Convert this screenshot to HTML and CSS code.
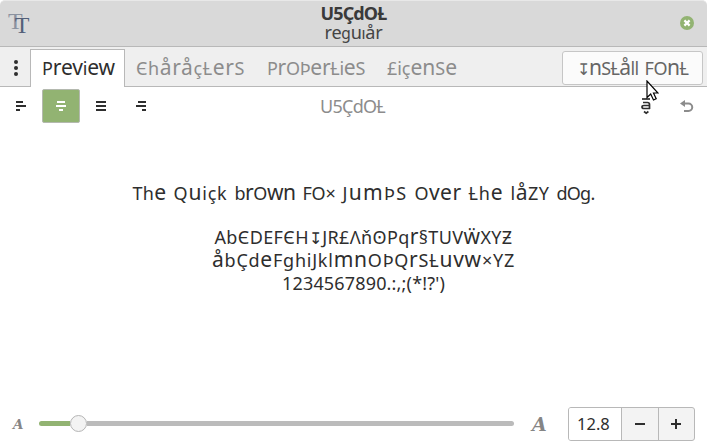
FILE: index.html
```html
<!DOCTYPE html>
<html lang="en">
<head>
<meta charset="utf-8">
<title>Font preview</title>
<link rel="stylesheet" href="styles.css">
</head>
<body>
<div class="window">
  <header class="titlebar">
    <div class="logo"><span class="logo-back">T</span><span class="logo-front">T</span></div>
    <div class="titles">
      <div class="title"><span class="w" data-w="66">U5ÇdOȽ</span></div>
      <div class="subtitle"><span class="w" data-w="58">reguıår</span></div>
    </div>
    <svg class="close" viewBox="0 0 14 14"><circle cx="7" cy="7" r="7"/><path d="M4.4 4.4l5.2 5.2M9.6 4.4L4.4 9.6"/></svg>
  </header>
  <nav class="tabs">
    <svg class="menu" viewBox="0 0 4 16"><circle cx="2" cy="2" r="2"/><circle cx="2" cy="8" r="2"/><circle cx="2" cy="14" r="2"/></svg>
    <div class="tab active"><span class="w" data-w="73">Preview</span></div>
    <div class="tab"><span class="w" data-w="109">ЄhåråçȽerS</span></div>
    <div class="tab"><span class="w" data-w="98">PrOÞerȽieS</span></div>
    <div class="tab"><span class="w" data-w="70">£içenSe</span></div>
    <button class="install"><span class="w" data-w="62">↧nSȽåll</span><span class="w" data-w="44">FOnȽ</span></button>
  </nav>
  <div class="tools">
    <div class="align"><svg viewBox="0 0 12 10"><path d="M1 1h7M1 5h10M1 9h4"/></svg></div>
    <div class="align on"><svg viewBox="0 0 12 10"><path d="M2 1h8M1 5h10M4 9h4"/></svg></div>
    <div class="align"><svg viewBox="0 0 12 10"><path d="M1 1h10M1 5h10M1 9h10"/></svg></div>
    <div class="align"><svg viewBox="0 0 12 10"><path d="M3 1h8M1 5h10M7 9h4"/></svg></div>
    <div class="name"><span class="w" data-w="65">U5ÇdOȽ</span></div>
    <svg class="edit" viewBox="0 0 12 18"><path d="M2 2h8"/><path d="M3 5.500h4.500q2 0 2 2v4.500M9.500 8.500H4q-2 0-2 1.500t2 1.500h6"/><path d="M4 14.500l2.200 1.700 2.200-1.700"/></svg>
    <svg class="undo" viewBox="0 0 14 13"><path d="M2 3.500h6.500a3.700 3.700 0 0 1 0 7.500H4"/><path class="head" d="M5 0v7L0 3.500z"/></svg>
  </div>
  <main class="sample">
    <div class="line pangram">
      <span class="w" data-w="34">The</span><span class="w" data-w="54">Quiçk</span><span class="w" data-w="61">brOwn</span><span class="w" data-w="33">FO×</span><span class="w" data-w="65">JumÞS</span><span class="w" data-w="47">Over</span><span class="w" data-w="35">Ƚhe</span><span class="w" data-w="39">låZY</span><span class="w" data-w="38">dOg.</span>
    </div>
    <div class="line"><span class="w" data-w="298">AbЄDEFЄH↧JR£ΛňʘPqr§TUVẅXYƵ</span></div>
    <div class="line"><span class="w" data-w="303">åbÇdeFghiJklmnOÞQrSȽuvw×YZ</span></div>
    <div class="line"><span class="w" data-w="163">1234567890.:,;(*!?')</span></div>
  </main>
  <footer class="size">
    <span class="small-a">A</span>
    <div class="slider"><div class="fill"></div><div class="knob"></div><div class="rest"></div></div>
    <span class="big-a">A</span>
    <div class="spin">
      <div class="value">12.8</div>
      <div class="step"><svg viewBox="0 0 10 10"><path d="M0 5h10"/></svg></div>
      <div class="step"><svg viewBox="0 0 10 10"><path d="M0 5h10M5 0v10"/></svg></div>
    </div>
  </footer>
  <svg class="cursor" viewBox="0 0 13 21"><path d="M1 1v16.500l3.700-3.500 2.800 6 2.700-1.300-2.700-5.700H12z"/></svg>
</div>
<script src="fit.js"></script>
</body>
</html>
```
FILE: styles.css
```css
* { box-sizing: border-box; }
body { margin: 0; background: #fff; }
.window {
  position: relative;
  width: 707px;
  height: 447px;
  display: flex;
  flex-direction: column;
  overflow: hidden;
  color: #2e2e2e;
  font: 18px "Noto Sans", sans-serif;
}
.w { display: inline-block; white-space: nowrap; font-weight: inherit; }
.tall { font-size: 1.17em; line-height: 0; }
.arrow { font-size: .9em; line-height: 0; }

.titlebar {
  height: 47px;
  flex: none;
  display: grid;
  grid-template-columns: 40px 1fr 40px;
  background: #d9d9d9;
  border-top: 1px solid #e8e8e8;
  border-bottom: 1px solid #b8b8b8;
  border-radius: 5px 5px 0 0;
}
.logo { padding: 7px 0 0 8px; font: 24px/26px "Liberation Serif", serif; display: flex; }
.logo-back { color: #8b92a0; }
.logo-front { color: #536079; margin: 4px 0 0 -8px; }
.titles { display: flex; flex-direction: column; align-items: center; padding-top: 3px; }
.title { font-weight: 700; font-size: 18px; line-height: 19px; height: 19px; color: #3a3a3a; }
.subtitle { font-size: 15.5px; line-height: 20px; height: 20px; color: #444; }
.close { width: 14px; height: 14px; margin: 15px 0 0 13px; }
.close circle { fill: #92b372; }
.close path { stroke: #fff; stroke-width: 2.2; }

.tabs {
  height: 40px;
  flex: none;
  display: flex;
  background: #efefef;
  border-bottom: 1px solid #b8b8b8;
  padding-right: 4px;
}
.menu { width: 4px; height: 16px; margin: 13px 12px 0 14px; fill: #2e2e2e; }
.tab { height: 38px; margin-top: 2px; padding-left: 11px; padding-right: 11px; line-height: 39px; color: #8c8c8c; }
.tab.active { width: 95px; height: 38px; padding: 0 10px 0 11px; border: 1px solid #b8b8b8; border-bottom: 0; background: #fff; color: #2e2e2e; line-height: 37px; margin-bottom: -1px; box-shadow: 0 1px #fff; }
.install {
  margin: 4px 0 0 auto;
  width: 141px;
  height: 34px;
  padding: 0;
  display: flex;
  justify-content: center;
  gap: 6px;
  border: 1px solid #c6c6c6;
  border-radius: 3px;
  background: #fbfbfb;
  color: #666;
  font: inherit;
  line-height: 32px;
}

.tools { height: 38px; flex: none; display: flex; padding: 2px 13px 0 2px; }
.align { width: 38px; height: 34px; margin-right: 2px; display: flex; align-items: center; justify-content: center; color: #2e2e2e; }
.align svg { width: 12px; height: 10px; fill: none; stroke: currentColor; stroke-width: 2; }
.align.on { color: #fff; background: #92b372; border: 1px solid #b4b9af; border-radius: 2px; }
.name { margin-left: 158px; line-height: 34px; color: #8c8c8c; }
.edit { width: 12px; height: 18px; margin: 8px 0 0 auto; fill: none; stroke: #2e2e2e; stroke-width: 1.7; }
.undo { width: 14px; height: 13px; margin: 11px 0 0 28px; fill: none; stroke: #8c8c8c; stroke-width: 2; }
.undo .head { fill: #8c8c8c; stroke: none; }

.sample { flex: 1; padding: 57px 0 0 20px; display: flex; flex-direction: column; align-items: center; }
.line { height: 23px; line-height: 23px; }
.pangram { display: flex; gap: 7px; margin-bottom: 21px; }

.size { height: 47px; flex: none; display: flex; align-items: center; padding: 0 12px; font: italic bold 15px "DejaVu Serif", serif; color: #858585; }
.small-a { width: 27px; padding-left: 1px; font-size: 13.500px; }
.slider { width: 475px; height: 17px; display: flex; align-items: center; }
.fill { width: 31px; height: 5px; background: #92b372; border-radius: 3px 0 0 3px; }
.knob { width: 17px; height: 17px; border: 1px solid #b5b5b5; border-radius: 50%; background: #f3f3f3; }
.rest { flex: 1; height: 5px; background: #bbb; border-radius: 0 3px 3px 0; }
.big-a { width: 54px; padding: 1px 0 0 18px; font-size: 19px; }
.spin { width: 127px; height: 34px; display: flex; border: 1px solid #b8b8b8; border-radius: 3px; overflow: hidden; background: #f3f3f3; color: #2e2e2e; font: 16.500px/31px "Noto Sans", sans-serif; }
.value { width: 52px; padding-left: 8px; background: #fff; }
.step { flex: 1; display: flex; align-items: center; justify-content: center; border-left: 1px solid #b8b8b8; }
.step svg { width: 10px; height: 10px; stroke: #2e2e2e; stroke-width: 2; }
.cursor { position: absolute; left: 646px; top: 80px; width: 13px; height: 21px; fill: #fff; stroke: #000; stroke-width: 1.2; }
```
FILE: fit.js
```js
// Raises x-height letters to cap height and tracks each word to its set width.
document.querySelectorAll(".w").forEach(function (word) {
  word.innerHTML = word.textContent
    .replace(/[ernumvwẅå]/g, '<span class="tall">$&</span>')
    .replace(/↧/g, '<span class="arrow">$&</span>');
  var target = Number(word.dataset.w);
  var count = Array.from(word.textContent).length;
  word.style.letterSpacing = (target - word.getBoundingClientRect().width) / count + "px";
  word.style.width = target + "px";
});
```
